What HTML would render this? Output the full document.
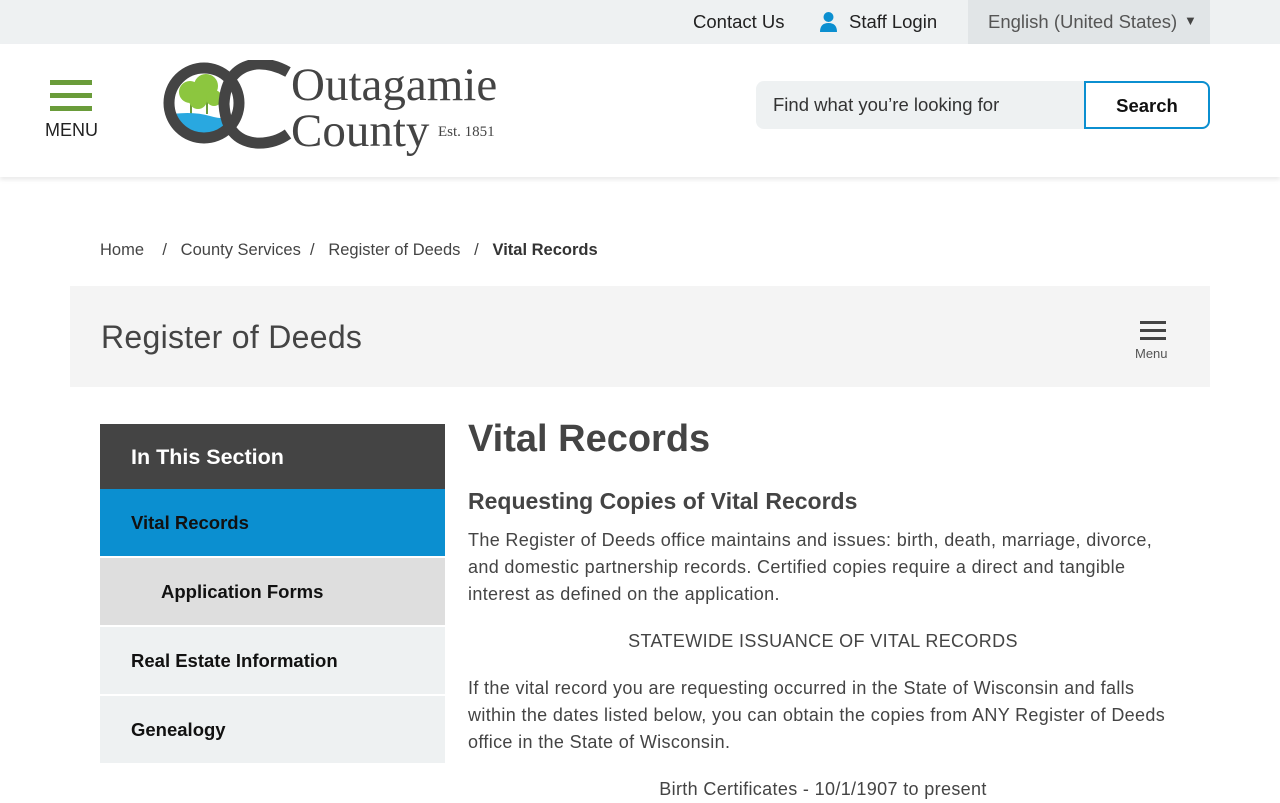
<!DOCTYPE html>
<html><head><meta charset="utf-8"><style>
*{margin:0;padding:0;box-sizing:border-box}
body{width:1280px;height:800px;overflow:hidden;background:#fff;font-family:"Liberation Sans","DejaVu Sans",sans-serif;color:#444}
.top{height:44px;background:#eef1f2;position:relative}
.top span{position:absolute;top:11px;font-size:18.5px;color:#222}
.lang{position:absolute;left:968px;top:0;width:242px;height:44px;background:#e1e5e7;color:#555;font-size:18.5px;padding:11px 0 0 20px}
.hdr{height:133px;position:relative;box-shadow:0 3px 4px rgba(0,0,0,.08)}
.bar{position:absolute;left:50px;width:42px;height:5px;background:#6a9c3a}
.srch{position:absolute;left:756px;top:37px;width:454px;height:48px;background:#eef1f2;border-radius:8px}
.srch .t{position:absolute;left:17px;top:13px;font-size:18.5px;color:#333}
.srch .b{position:absolute;right:0;top:0;width:126px;height:48px;border:2px solid #0b8fd0;border-radius:0 8px 8px 0;background:#fff;font-weight:bold;font-size:18.5px;color:#111;text-align:center;padding-top:12px}
.bc{position:absolute;top:241px;left:100px;font-size:16.5px;color:#444}
.band{position:absolute;left:70px;top:286px;width:1140px;height:101px;background:#f4f4f4}
.band h2{position:absolute;left:31px;top:33px;font-weight:normal;font-size:32px;color:#444;letter-spacing:.3px}
.side{position:absolute;left:100px;top:424px;width:345px}
.side div{font-weight:bold;font-size:18.5px;color:#111;padding-left:31px}
.main{position:absolute;left:468px;top:418px;width:712px}
.main p{font-size:18px;line-height:27px;color:#444;letter-spacing:.35px}
</style></head><body>
<div class="top">
<span style="left:693px">Contact Us</span>
<svg style="position:absolute;left:820px;top:12px" width="17" height="20" viewBox="0 0 17 20"><circle cx="8.5" cy="5" r="5" fill="#0b8fd0"/><path d="M0 20 Q0 11 8.5 11 Q17 11 17 20Z" fill="#0b8fd0"/></svg>
<span style="left:849px">Staff Login</span>
<div class="lang">English (United States) <span style="position:absolute;left:216px;top:13px;font-size:13px;color:#444">▼</span></div>
</div>
<div class="hdr">
<div class="bar" style="top:36px"></div><div class="bar" style="top:49px"></div><div class="bar" style="top:62px"></div>
<div style="position:absolute;left:45px;top:76px;font-size:18px;color:#222">MENU</div>
<svg style="position:absolute;left:160px;top:16px" width="345" height="100" viewBox="0 0 345 100">
<defs><clipPath id="c"><circle cx="44" cy="43" r="30"/></clipPath></defs>
<g clip-path="url(#c)"><rect x="0" y="0" width="90" height="90" fill="#fff"/>
<rect x="30" y="34" width="2" height="22" fill="#6a9c3a"/><rect x="46" y="30" width="2" height="24" fill="#6a9c3a"/>
<circle cx="30" cy="32" r="11" fill="#8cc63f"/><circle cx="46" cy="26" r="12" fill="#8cc63f"/><circle cx="38" cy="40" r="9" fill="#8cc63f"/><circle cx="54" cy="38" r="8" fill="#8cc63f"/>
<path d="M0 56 Q30 50 50 56 Q70 62 90 52 L90 90 L0 90Z" fill="#29a8e0"/></g>
<circle cx="44" cy="43" r="35" fill="none" stroke="#444" stroke-width="11"/>
<path d="M128 12 Q112 3 96 4 Q66 8 64 44 Q66 80 96 83 Q114 84 128 74" fill="none" stroke="#444" stroke-width="11"/>
<text x="131" y="40" font-family="Liberation Serif,serif" font-size="47" fill="#444">Outagamie</text>
<text x="131" y="86" font-family="Liberation Serif,serif" font-size="47" fill="#444">County</text>
<text x="278" y="76" font-family="Liberation Serif,serif" font-size="15" fill="#444">Est. 1851</text>
</svg>
<div class="srch"><div class="t">Find what you’re looking for</div><div class="b">Search</div></div>
</div>
<div class="bc">Home &nbsp;&nbsp; / &nbsp;&nbsp;County Services &nbsp;/ &nbsp;&nbsp;Register of Deeds &nbsp;&nbsp;/ &nbsp;&nbsp;<b style="color:#333">Vital Records</b></div>
<div class="band"><h2>Register of Deeds</h2>
<div style="position:absolute;left:1070px;top:35px;width:26px;height:3px;background:#444"></div>
<div style="position:absolute;left:1070px;top:43px;width:26px;height:3px;background:#444"></div>
<div style="position:absolute;left:1070px;top:51px;width:26px;height:3px;background:#444"></div>
<div style="position:absolute;left:1065px;top:60px;font-size:13px;color:#555">Menu</div>
</div>
<div class="side">
<div style="background:#444;color:#fff;height:65px;padding-top:21px;font-size:21.5px">In This Section</div>
<div style="background:#0b8fd0;height:67px;padding-top:23px">Vital Records</div>
<div style="background:#dedede;height:67px;margin-top:2px;padding-top:23px;padding-left:61px">Application Forms</div>
<div style="background:#eef1f2;height:67px;margin-top:2px;padding-top:23px">Real Estate Information</div>
<div style="background:#eef1f2;height:67px;margin-top:2px;padding-top:23px">Genealogy</div>
</div>
<div class="main">
<div style="font-size:38px;font-weight:bold;color:#444">Vital Records</div>
<div style="font-size:23px;font-weight:bold;color:#444;margin-top:27px">Requesting Copies of Vital Records</div>
<p style="margin-top:12px">The Register of Deeds office maintains and issues: birth, death, marriage, divorce,<br>and domestic partnership records. Certified copies require a direct and tangible<br>interest as defined on the application.</p>
<p style="margin-top:20px;text-align:center;width:710px">STATEWIDE ISSUANCE OF VITAL RECORDS</p>
<p style="margin-top:20px">If the vital record you are requesting occurred in the State of Wisconsin and falls<br>within the dates listed below, you can obtain the copies from ANY Register of Deeds<br>office in the State of Wisconsin.</p>
<p style="margin-top:20px;text-align:center;width:710px">Birth Certificates - 10/1/1907 to present</p>
</div>
</body></html>
